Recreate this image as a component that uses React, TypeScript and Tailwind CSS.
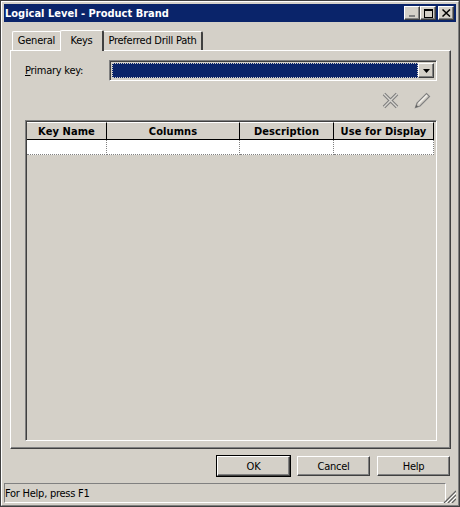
import type { ReactNode } from "react";

function CaptionButton({ children }: { children: ReactNode }) {
  return (
    <div className="w-4 h-[14px] bg-[#d4d0c8] border border-t-white border-l-white border-r-[#404040] border-b-[#404040] shadow-[inset_-1px_-1px_0_#808080] flex items-center justify-center">
      {children}
    </div>
  );
}

function DialogButton({ label, isDefault }: { label: string; isDefault?: boolean }) {
  return (
    <div className={isDefault ? "border border-black" : "p-px"}>
      <button className="w-[73px] h-[20px] flex items-center justify-center bg-[#d4d0c8] border border-t-white border-l-white border-r-[#404040] border-b-[#404040] shadow-[inset_-1px_-1px_0_#808080] text-[11px] tracking-[-0.25px] text-black">
        {label}
      </button>
    </div>
  );
}

const columns = [
  { name: "Key Name", width: "w-[80px]" },
  { name: "Columns", width: "w-[133px]" },
  { name: "Description", width: "w-[94px]" },
  { name: "Use for Display", width: "w-[100px]" },
];

export default function App() {
  return (
    <div className="w-[460px] h-[507px] overflow-hidden bg-[#d4d0c8] border border-[#404040] text-black font-['DejaVu_Sans_Condensed','Liberation_Sans',sans-serif] text-[11px] tracking-[-0.25px] leading-none">
      <div className="h-full flex flex-col border border-t-white border-l-white border-r-[#808080] border-b-[#808080] p-[2px]">
        {/* Title bar */}
        <div className="h-[18px] shrink-0 bg-[#0a246a] flex items-center justify-between pl-px pr-[2px]">
          <span className="text-white font-bold text-[11px] tracking-normal whitespace-nowrap">Logical Level - Product Brand</span>
          <div className="flex items-center">
            <CaptionButton>
              <div className="w-[6px] h-[2px] bg-[#808080] mt-[6px] mr-[1px]" />
            </CaptionButton>
            <CaptionButton>
              <div className="w-[9px] h-[9px] border border-t-2 border-black" />
            </CaptionButton>
            <div className="w-[2px]" />
            <CaptionButton>
              <svg width="9" height="8" viewBox="0 0 9 8">
                <path d="M0.5 0.5L8 7.5M8 0.5L0.5 7.5" stroke="#000" strokeWidth="1.5" fill="none" />
              </svg>
            </CaptionButton>
          </div>
        </div>

        {/* Tabs */}
        <div className="flex items-end pl-[8px] pt-[8px] h-[28px] shrink-0 relative z-10">
          <div className="w-[48px] h-[19px] pb-px border-t border-l border-white rounded-tl-[2px] flex items-center justify-center whitespace-nowrap">
            General
          </div>
          <div className="w-[44px] h-[21px] -mb-px pb-px bg-[#d4d0c8] border-t border-l border-white rounded-t-[2px] border-r-2 border-r-[#404040] flex items-center justify-center whitespace-nowrap">
            Keys
          </div>
          <div className="w-[99px] h-[19px] pb-px border-t border-white rounded-tr-[2px] border-r-2 border-r-[#404040] flex items-center justify-center whitespace-nowrap">
            Preferred Drill Path
          </div>
        </div>

        {/* Tab panel */}
        <div className="ml-[6px] mr-[5px] h-[399px] shrink-0 border border-t-white border-l-white border-r-[#404040] border-b-[#404040] shadow-[inset_-1px_-1px_0_#808080] pl-[14px] pr-[13px] pt-[9px] pb-[7px] flex flex-col">
          <div className="flex items-center h-[21px] shrink-0">
            <span className="w-[84px] whitespace-nowrap">
              <span className="underline">P</span>rimary key:
            </span>
            <div className="flex-1 h-[21px] border border-t-[#808080] border-l-[#808080] border-r-white border-b-white shadow-[inset_1px_1px_0_#404040] p-[2px] flex">
              <div className="flex-1 bg-[#0a246a] border border-dotted border-[#d4d0c8]" />
              <div className="w-4 bg-[#d4d0c8] border border-t-white border-l-white border-r-[#404040] border-b-[#404040] shadow-[inset_-1px_-1px_0_#808080] flex items-center justify-center">
                <svg width="7" height="4" viewBox="0 0 7 4">
                  <path d="M0 0H7L3.5 4Z" fill="#000" />
                </svg>
              </div>
            </div>
          </div>

          {/* Toolbar */}
          <div className="h-[39px] shrink-0 flex items-center justify-end gap-[15px] pr-[6px]">
            <svg width="17" height="17" viewBox="0 0 17 17">
              <path d="M2 2L15 15M15 2L2 15" stroke="#808080" strokeWidth="3.6" fill="none" />
              <path d="M2 2L15 15M15 2L2 15" stroke="#d9d7d2" strokeWidth="1.4" fill="none" />
            </svg>
            <svg width="17" height="17" viewBox="0 0 17 17">
              <path d="M1.5 15.5L3 11L12.5 1.5L15.5 4.5L6 14Z" fill="#d4d0c8" stroke="#808080" strokeWidth="1.2" />
              <path d="M4.5 11.5L13 3" stroke="#f2f1ed" strokeWidth="1.2" fill="none" />
              <path d="M1.5 15.5L2.4 12.8L4.2 14.6Z" fill="#606060" />
            </svg>
          </div>

          {/* Keys grid */}
          <div className="flex-1 border border-t-[#808080] border-l-[#808080] border-r-white border-b-white shadow-[inset_1px_1px_0_#404040] pl-px pt-px">
            <div className="flex h-[18px] w-[407px] border-b border-black">
              {columns.map((c) => (
                <div
                  key={c.name}
                  className={`${c.width} shrink-0 flex items-center justify-center border-t border-t-white border-r border-r-black font-bold tracking-[0.1px] whitespace-nowrap`}
                >
                  {c.name}
                </div>
              ))}
            </div>
            <div className="flex h-[15px] bg-white w-[407px]">
              {columns.map((c) => (
                <div
                  key={c.name}
                  className={`${c.width} shrink-0 border-r border-b border-dotted border-[#808080]`}
                />
              ))}
            </div>
          </div>
        </div>

        {/* Dialog buttons */}
        <div className="h-[34px] shrink-0 flex items-start justify-end gap-[5px] pr-[5px] pt-[6px]">
          <DialogButton label="OK" isDefault />
          <DialogButton label="Cancel" />
          <DialogButton label="Help" />
        </div>

        {/* Status bar */}
        <div className="flex-1 relative flex">
          <div className="w-[442px] h-[20px] border border-t-[#808080] border-l-[#808080] border-r-white border-b-white flex items-center">
            For Help, press F1
          </div>
          <svg className="absolute right-0 bottom-0" width="13" height="13" viewBox="0 0 13 13">
            <path d="M1 13L13 1M5 13L13 5M9 13L13 9" stroke="#606060" strokeWidth="1.2" fill="none" />
            <path d="M3 13L13 3M7 13L13 7" stroke="#ffffff" strokeWidth="1" fill="none" />
          </svg>
        </div>
      </div>
    </div>
  );
}
